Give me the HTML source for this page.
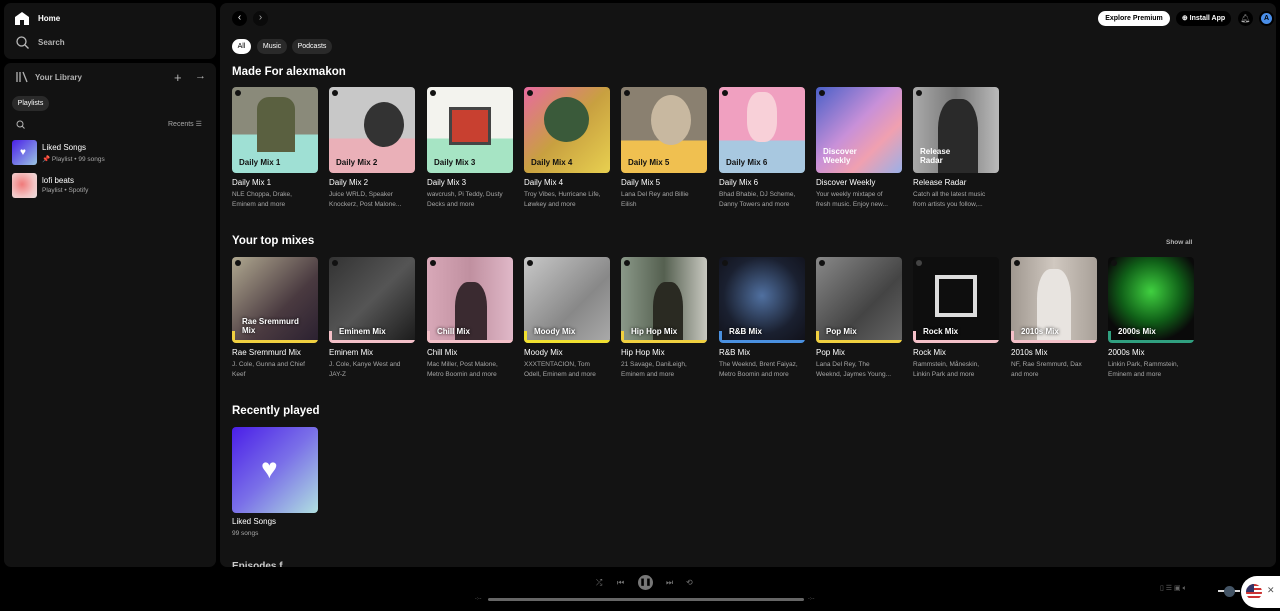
<!DOCTYPE html>
<html><head><meta charset="utf-8"><style>
*{margin:0;padding:0;box-sizing:border-box}
body{width:1280px;height:611px;background:#000;font-family:"Liberation Sans",sans-serif;color:#fff;position:relative;overflow:hidden}
.p{position:absolute;background:#121212;border-radius:7px}
.a{position:absolute}
.b{font-weight:bold}
.img{position:absolute;width:86px;height:86px;border-radius:4px;overflow:hidden}
.t{position:absolute;font-size:8px;color:#fff;white-space:nowrap}
.s{position:absolute;font-size:6.5px;color:#a7a7a7;line-height:10px;width:80px}
.lbl{position:absolute;left:7px;bottom:6px;font-size:8px;font-weight:bold}
.dot{position:absolute;left:3px;top:3px;width:6px;height:6px;border-radius:50%;background:#111}
.l2{position:absolute;left:0;bottom:7px;font-size:8px;font-weight:bold;padding-left:10px;text-shadow:0 0 3px #000}
.bar{position:absolute;left:0;bottom:3px;width:3px;height:9px}
.stripe{position:absolute;left:0;right:0;bottom:0;height:3px}
.h{position:absolute;font-size:11.5px;font-weight:bold}
.chip{position:absolute;height:15px;border-radius:8px;background:#2a2a2a;font-size:7px;line-height:15px;text-align:center}
</style></head><body>
<div class="p" style="left:4px;top:3px;width:212px;height:56px"></div>
<div class="p" style="left:4px;top:63px;width:212px;height:504px"></div>
<div class="p" style="left:220px;top:3px;width:1056px;height:564px;background:#131313"></div>

<svg class="a" style="left:15px;top:12px" width="14" height="13" viewBox="0 0 14 13"><path d="M7 0L0 5v8h5V8h4v5h5V5z" fill="#fff"/></svg>
<div class="t b" style="left:38px;top:14px">Home</div>
<svg class="a" style="left:16px;top:36px" width="13" height="13" viewBox="0 0 13 13"><circle cx="5.5" cy="5.5" r="4.5" stroke="#bbb" stroke-width="1.3" fill="none"/><path d="M9 9l3.5 3.5" stroke="#bbb" stroke-width="1.3"/></svg>
<div class="t b" style="left:38px;top:38px;color:#b3b3b3">Search</div>

<svg class="a" style="left:16px;top:71px" width="12" height="12" viewBox="0 0 12 12"><path d="M1 1v10M4 1v10M7 1l4 10" stroke="#b3b3b3" stroke-width="1.3" fill="none"/></svg>
<div class="t b" style="left:35px;top:73px;color:#b3b3b3">Your Library</div>
<div class="t" style="left:174px;top:70px;font-size:13px;color:#b3b3b3">+</div>
<div class="t" style="left:195px;top:70px;font-size:11px;color:#b3b3b3">→</div>
<div class="chip" style="left:12px;top:96px;width:37px">Playlists</div>
<svg class="a" style="left:16px;top:120px" width="9" height="9" viewBox="0 0 9 9"><circle cx="4" cy="4" r="3" stroke="#b3b3b3" fill="none"/><path d="M6 6l2.5 2.5" stroke="#b3b3b3"/></svg>
<div class="t" style="left:168px;top:120px;font-size:7px;color:#a7a7a7">Recents ☰</div>
<div class="a" style="left:12px;top:140px;width:25px;height:25px;border-radius:3px;background:linear-gradient(135deg,#4a1fe8,#9bc6e4)"><div style="position:absolute;left:8px;top:7px;font-size:10px">♥</div></div>
<div class="t" style="left:42px;top:143px">Liked Songs</div>
<div class="t" style="left:42px;top:155px;font-size:6.5px;color:#a7a7a7"><span style="color:#1ed760">📌</span> Playlist • 99 songs</div>
<div class="a" style="left:12px;top:173px;width:25px;height:25px;border-radius:3px;background:radial-gradient(circle at 40% 45%,#f07a7a,#f3c4c4 60%,#e8e0e0)"></div>
<div class="t" style="left:42px;top:176px">lofi beats</div>
<div class="t" style="left:42px;top:187px;font-size:6.5px;color:#a7a7a7">Playlist • Spotify</div>

<div class="a" style="left:232px;top:11px;width:15px;height:15px;border-radius:50%;background:#000;font-size:10px;text-align:center;line-height:14px">‹</div>
<div class="a" style="left:253px;top:11px;width:15px;height:15px;border-radius:50%;background:#0a0a0a;font-size:10px;text-align:center;line-height:14px;color:#aaa">›</div>
<div class="a b" style="left:1098px;top:11px;width:72px;height:15px;border-radius:8px;background:#fff;color:#000;font-size:7px;line-height:15px;text-align:center">Explore Premium</div>
<div class="a b" style="left:1176px;top:11px;width:55px;height:15px;border-radius:8px;background:#000;font-size:7px;line-height:15px;text-align:center">⊕ Install App</div>
<div class="a" style="left:1238px;top:11px;width:15px;height:15px;border-radius:50%;background:#000;font-size:8px;text-align:center;line-height:15px;color:#aaa">🔔︎</div>
<div class="a b" style="left:1259px;top:11px;width:15px;height:15px;border-radius:50%;background:#000"><div style="margin:2px;width:11px;height:11px;border-radius:50%;background:#4a8ee8;color:#000;font-size:7px;line-height:11px;text-align:center">A</div></div>

<div class="chip" style="left:232px;top:39px;width:19px;background:#fff;color:#000">All</div>
<div class="chip" style="left:257px;top:39px;width:30px">Music</div>
<div class="chip" style="left:292px;top:39px;width:40px">Podcasts</div>

<div class="h" style="left:232px;top:66px">Made For alexmakon</div>

<div class="img" style="left:232px;top:87px;background:linear-gradient(#8a8a7a 0 55%,#9fe0d4 55%)"><div class="a" style="left:25px;top:10px;width:38px;height:55px;background:#5a6040;border-radius:12px 12px 0 0"></div><div class="dot"></div><div class="lbl" style="color:#111">Daily Mix 1</div></div>
<div class="img" style="left:329px;top:87px;background:linear-gradient(#c8c8c8 0 60%,#eab0b8 60%)"><div class="a" style="left:35px;top:15px;width:40px;height:45px;background:#333;border-radius:50%"></div><div class="dot"></div><div class="lbl" style="color:#111">Daily Mix 2</div></div>
<div class="img" style="left:427px;top:87px;background:linear-gradient(#f3f3ee 0 60%,#a6e4c4 60%)"><div class="a" style="left:22px;top:20px;width:42px;height:38px;background:#c84030;border:3px solid #444"></div><div class="dot"></div><div class="lbl" style="color:#111">Daily Mix 3</div></div>
<div class="img" style="left:524px;top:87px;background:linear-gradient(135deg,#e86aa0,#c8a040 50%,#e8d050)"><div class="a" style="left:20px;top:10px;width:45px;height:45px;background:#3a5a3a;border-radius:50%"></div><div class="dot"></div><div class="lbl" style="color:#111">Daily Mix 4</div></div>
<div class="img" style="left:621px;top:87px;background:linear-gradient(#8a8070 0 62%,#f0c050 62%)"><div class="a" style="left:30px;top:8px;width:40px;height:50px;background:#c8b8a0;border-radius:50%"></div><div class="dot"></div><div class="lbl" style="color:#111">Daily Mix 5</div></div>
<div class="img" style="left:719px;top:87px;background:linear-gradient(#f0a0c0 0 62%,#a8c8e0 62%)"><div class="a" style="left:28px;top:5px;width:30px;height:50px;background:#f8d0d8;border-radius:40%"></div><div class="dot"></div><div class="lbl" style="color:#111">Daily Mix 6</div></div>
<div class="img" style="left:816px;top:87px;background:linear-gradient(135deg,#4a60c8,#c890d8 45%,#f0a0b0 70%,#9ab0e8)"><div class="dot"></div><div class="lbl" style="bottom:8px;line-height:9px">Discover<br>Weekly</div></div>
<div class="img" style="left:913px;top:87px;background:linear-gradient(90deg,#aaa,#777 50%,#bbb)"><div class="a" style="left:25px;top:12px;width:40px;height:74px;background:#2a2a2a;border-radius:40% 40% 0 0"></div><div class="dot"></div><div class="lbl" style="bottom:8px;line-height:9px">Release<br>Radar</div></div>

<div class="t" style="left:232px;top:178px">Daily Mix 1</div><div class="s" style="left:232px;top:190px">NLE Choppa, Drake, Eminem and more</div>
<div class="t" style="left:329px;top:178px">Daily Mix 2</div><div class="s" style="left:329px;top:190px">Juice WRLD, Speaker Knockerz, Post Malone...</div>
<div class="t" style="left:427px;top:178px">Daily Mix 3</div><div class="s" style="left:427px;top:190px">wavcrush, Pi Teddy, Dusty Decks and more</div>
<div class="t" style="left:524px;top:178px">Daily Mix 4</div><div class="s" style="left:524px;top:190px">Troy Vibes, Hurricane Life, Løwkey and more</div>
<div class="t" style="left:621px;top:178px">Daily Mix 5</div><div class="s" style="left:621px;top:190px">Lana Del Rey and Billie Eilish</div>
<div class="t" style="left:719px;top:178px">Daily Mix 6</div><div class="s" style="left:719px;top:190px">Bhad Bhabie, DJ Scheme, Danny Towers and more</div>
<div class="t" style="left:816px;top:178px">Discover Weekly</div><div class="s" style="left:816px;top:190px">Your weekly mixtape of fresh music. Enjoy new...</div>
<div class="t" style="left:913px;top:178px">Release Radar</div><div class="s" style="left:913px;top:190px">Catch all the latest music from artists you follow,...</div>

<div class="h" style="left:232px;top:235px">Your top mixes</div>
<div class="t b" style="left:1166px;top:239px;font-size:6.5px;color:#b3b3b3">Show all</div>

<div class="img" style="left:232px;top:257px;background:linear-gradient(135deg,#b0a890,#4a3a40 60%,#2a2030)"><div class="dot"></div><div class="l2" style="line-height:9px;bottom:8px">Rae Sremmurd<br>Mix</div><div class="bar" style="background:#f0d040"></div><div class="stripe" style="background:#f0d040"></div></div>
<div class="img" style="left:329px;top:257px;background:linear-gradient(135deg,#333,#555 50%,#1a1a1a)"><div class="dot"></div><div class="l2">Eminem Mix</div><div class="bar" style="background:#f4c0c8"></div><div class="stripe" style="background:#f4c0c8"></div></div>
<div class="img" style="left:427px;top:257px;background:linear-gradient(90deg,#d8a8b8,#c090a0 50%,#e0b8c8)"><div class="a" style="left:28px;top:25px;width:32px;height:61px;background:#3a2a30;border-radius:40% 40% 0 0"></div><div class="dot"></div><div class="l2">Chill Mix</div><div class="bar" style="background:#f4c0c8"></div><div class="stripe" style="background:#f4c0c8"></div></div>
<div class="img" style="left:524px;top:257px;background:linear-gradient(135deg,#c8c8c8,#888 60%,#aaa)"><div class="dot"></div><div class="l2">Moody Mix</div><div class="bar" style="background:#f0e030"></div><div class="stripe" style="background:#f0e030"></div></div>
<div class="img" style="left:621px;top:257px;background:linear-gradient(90deg,#8a9888,#556050 50%,#c8c8c0)"><div class="a" style="left:32px;top:25px;width:30px;height:61px;background:#2a2a22;border-radius:40% 40% 0 0"></div><div class="dot"></div><div class="l2">Hip Hop Mix</div><div class="bar" style="background:#f0d040"></div><div class="stripe" style="background:#f0d040"></div></div>
<div class="img" style="left:719px;top:257px;background:radial-gradient(circle at 50% 45%,#5070a0,#1a2030 60%,#101018)"><div class="dot"></div><div class="l2">R&amp;B Mix</div><div class="bar" style="background:#4a90e0"></div><div class="stripe" style="background:#4a90e0"></div></div>
<div class="img" style="left:816px;top:257px;background:linear-gradient(135deg,#888,#444 60%,#666)"><div class="dot"></div><div class="l2">Pop Mix</div><div class="bar" style="background:#f0d040"></div><div class="stripe" style="background:#f0d040"></div></div>
<div class="img" style="left:913px;top:257px;background:#0e0e0e"><div class="a" style="left:22px;top:18px;width:42px;height:42px;border:4px solid #ddd"></div><div class="dot" style="background:#444"></div><div class="l2">Rock Mix</div><div class="bar" style="background:#f4c0c8"></div><div class="stripe" style="background:#f4c0c8"></div></div>
<div class="img" style="left:1011px;top:257px;background:linear-gradient(90deg,#a09890,#d0c8c0 50%,#a8a098)"><div class="a" style="left:26px;top:12px;width:34px;height:74px;background:#e8e4e0;border-radius:40% 40% 0 0"></div><div class="dot"></div><div class="l2">2010s Mix</div><div class="bar" style="background:#f4c0c8"></div><div class="stripe" style="background:#f4c0c8"></div></div>
<div class="img" style="left:1108px;top:257px;background:radial-gradient(circle at 50% 40%,#40d040,#106018 45%,#0a0a0a 75%)"><div class="dot"></div><div class="l2">2000s Mix</div><div class="bar" style="background:#30a080"></div><div class="stripe" style="background:#30a080"></div></div>

<div class="t" style="left:232px;top:348px">Rae Sremmurd Mix</div><div class="s" style="left:232px;top:360px">J. Cole, Gunna and Chief Keef</div>
<div class="t" style="left:329px;top:348px">Eminem Mix</div><div class="s" style="left:329px;top:360px">J. Cole, Kanye West and JAY-Z</div>
<div class="t" style="left:427px;top:348px">Chill Mix</div><div class="s" style="left:427px;top:360px">Mac Miller, Post Malone, Metro Boomin and more</div>
<div class="t" style="left:524px;top:348px">Moody Mix</div><div class="s" style="left:524px;top:360px">XXXTENTACION, Tom Odell, Eminem and more</div>
<div class="t" style="left:621px;top:348px">Hip Hop Mix</div><div class="s" style="left:621px;top:360px">21 Savage, DaniLeigh, Eminem and more</div>
<div class="t" style="left:719px;top:348px">R&amp;B Mix</div><div class="s" style="left:719px;top:360px">The Weeknd, Brent Faiyaz, Metro Boomin and more</div>
<div class="t" style="left:816px;top:348px">Pop Mix</div><div class="s" style="left:816px;top:360px">Lana Del Rey, The Weeknd, Jaymes Young...</div>
<div class="t" style="left:913px;top:348px">Rock Mix</div><div class="s" style="left:913px;top:360px">Rammstein, Måneskin, Linkin Park and more</div>
<div class="t" style="left:1011px;top:348px">2010s Mix</div><div class="s" style="left:1011px;top:360px">NF, Rae Sremmurd, Dax and more</div>
<div class="t" style="left:1108px;top:348px">2000s Mix</div><div class="s" style="left:1108px;top:360px">Linkin Park, Rammstein, Eminem and more</div>

<div class="h" style="left:232px;top:405px">Recently played</div>
<div class="img" style="left:232px;top:427px;background:linear-gradient(135deg,#4a1ee8,#7a70e8 50%,#b0e0e0)"><div style="position:absolute;left:29px;top:26px;font-size:28px;line-height:32px">♥</div></div>
<div class="t" style="left:232px;top:517px">Liked Songs</div>
<div class="s" style="left:232px;top:529px">99 songs</div>
<div class="h" style="left:232px;top:561px;font-size:10px;color:#ccc">Episodes f</div>
<div class="a" style="left:0;top:567px;width:1280px;height:44px;background:#000"></div>

<div class="t" style="left:596px;top:578px;color:#777;font-size:8px">⤮</div>
<div class="t" style="left:617px;top:578px;color:#777;font-size:8px">⏮︎</div>
<div class="a" style="left:638px;top:575px;width:15px;height:15px;border-radius:50%;background:#777;font-size:7px;text-align:center;line-height:15px;color:#000;font-weight:bold">❚❚</div>
<div class="t" style="left:666px;top:578px;color:#777;font-size:8px">⏭︎</div>
<div class="t" style="left:686px;top:578px;color:#777;font-size:8px">⟲</div>
<div class="t" style="left:475px;top:596px;color:#666;font-size:5px">-:--</div>
<div class="a" style="left:488px;top:598px;width:316px;height:3px;border-radius:2px;background:#666"></div>
<div class="t" style="left:808px;top:596px;color:#666;font-size:5px">-:--</div>
<div class="t" style="left:1160px;top:584px;color:#666;font-size:7px">▯ ☰ ▣ 🔈︎</div>
<div class="a" style="left:1218px;top:590px;width:22px;height:2px;background:#ddd"></div>
<div class="a" style="left:1224px;top:586px;width:11px;height:11px;border-radius:50%;background:#456"></div>
<div class="a" style="left:1241px;top:576px;width:39px;height:32px;border-radius:16px 0 0 16px;background:#fff"></div>
<div class="a" style="left:1246px;top:584px;width:16px;height:16px;border-radius:50%;overflow:hidden;background:repeating-linear-gradient(#c33 0 2px,#fff 2px 4px)"><div style="width:8px;height:8px;background:#336"></div></div>
<div class="t" style="left:1267px;top:585px;color:#555;font-size:9px">✕</div>
</body></html>
